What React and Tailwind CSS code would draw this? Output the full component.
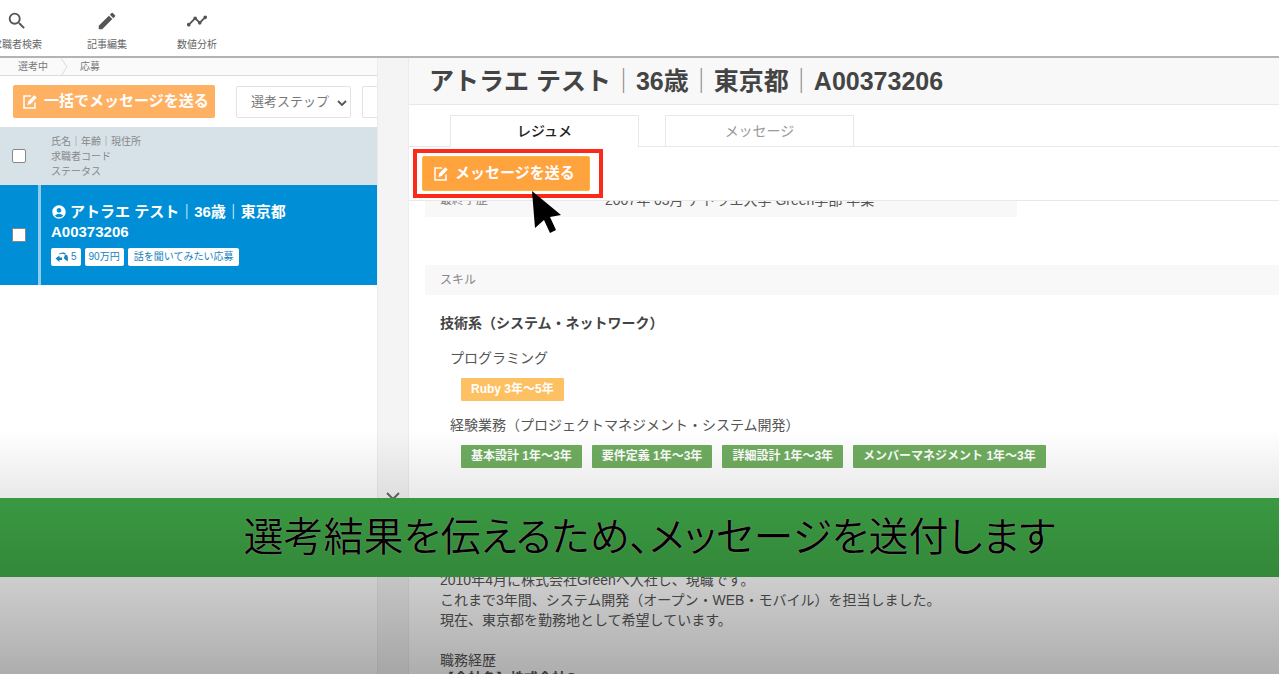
import { useState } from 'react';
import { MdSearch, MdModeEdit, MdTimeline, MdAccountCircle } from 'react-icons/md';

const navItems = [
  { label: '求職者検索', Icon: MdSearch },
  { label: '記事編集', Icon: MdModeEdit },
  { label: '数値分析', Icon: MdTimeline },
];

const experience = ['基本設計 1年〜3年', '要件定義 1年〜3年', '詳細設計 1年〜3年', 'メンバーマネジメント 1年〜3年'];

function ComposeIcon() {
  return (
    <svg viewBox="0 0 16 16" className="size-4 shrink-0" fill="none" stroke="currentColor" strokeWidth="1.5">
      <path d="M9 2H2v12h11V8.5" />
      <path d="M12.2 1.2 14.8 3.6 8.6 10 5.4 11 6.2 7.6z" fill="currentColor" stroke="none" />
    </svg>
  );
}

function ReplyIcon() {
  return (
    <svg viewBox="0 0 14 12" className="h-3 w-[14px]" fill="currentColor">
      <path d="M0.500 7.500 4.500 4.500v2h2.500v2.500H4.500V11z" />
      <path d="M3.500 3.500C5.500 1.200 9 .8 11 3l-.8.8C8.500 2.500 6 2.500 3.500 3.500z" />
      <path d="M9.500 4.500 12 3.800c1 2 1.200 4.200.5 6.700L9 7.500z" />
    </svg>
  );
}

function Header() {
  return (
    <header className="z-10 h-[58px] shrink-0 overflow-hidden border-b-2 border-[#b4b4b4] bg-white">
      <nav className="-ml-7 flex">
        {navItems.map(({ label, Icon }) => (
          <a key={label} href="#" className="flex w-[90px] flex-col items-center gap-[3px] pt-[10px] text-[10px] leading-5 text-[#666]">
            <Icon className="size-[22px] text-[#555]" />
            {label}
          </a>
        ))}
      </nav>
    </header>
  );
}

function CandidateList() {
  const [checked, setChecked] = useState(false);

  return (
    <aside className="w-[377px] shrink-0 overflow-hidden bg-white">
      <div className="flex h-[18px] items-center border-b border-[#dcdcdc] bg-[#fafafa] pl-[18px] text-[10px] text-[#777]">
        <span>選考中</span>
        <svg viewBox="0 0 8 18" className="mx-3 h-[18px] w-2" fill="none" stroke="#ddd">
          <path d="M1 0 7 9 1 18" />
        </svg>
        <span>応募</span>
      </div>

      <div className="flex h-[51px] items-center pl-[13px]">
        <button className="flex h-[33px] w-[202px] shrink-0 items-center gap-[6px] rounded-xs bg-[#ffb163] pl-[9px] text-[15px] font-bold text-white">
          <ComposeIcon />
          一括でメッセージを送る
        </button>
        <div className="relative ml-[21px] shrink-0">
          <select aria-label="選考ステップ" className="h-8 w-[115px] appearance-none rounded-xs border border-[#e3e3e3] bg-white pl-[14px] text-[13px] text-[#777]">
            <option>選考ステップ</option>
          </select>
          <svg viewBox="0 0 10 6" className="pointer-events-none absolute right-1 top-[14px] h-[6px] w-[10px]" fill="none" stroke="#555" strokeWidth="1.8">
            <path d="M1 1 5 5 9 1" />
          </svg>
        </div>
        <button aria-label="絞り込み" className="ml-[11px] h-8 w-[115px] shrink-0 rounded-xs border border-[#e3e3e3] bg-white"></button>
      </div>

      <div className="flex h-[58px] items-center bg-[#d6e1e8]">
        <input type="checkbox" aria-label="すべて選択" className="ml-3 size-[14px] appearance-none rounded-[2px] border border-[#888] bg-white" />
        <div className="ml-[25px] text-[10px] leading-[15px] text-[#888]">
          <p>氏名｜年齢｜現住所</p>
          <p>求職者コード</p>
          <p>ステータス</p>
        </div>
      </div>

      <div className="flex h-[100px] bg-[#008fd7] text-white">
        <div className="flex w-[38px] items-center pl-3">
          <input
            type="checkbox"
            aria-label="アトラエ テストを選択"
            checked={checked}
            onChange={(e) => setChecked(e.target.checked)}
            className="size-[14px] appearance-none rounded-[1px] border border-[#888] bg-white checked:bg-sky-200"
          />
        </div>
        <div className="w-[3px] bg-[#8fccee]" />
        <div className="flex-1 pl-[10px] pt-[17px]">
          <p className="flex items-center gap-[3px] text-[15px] font-bold leading-5">
            <MdAccountCircle className="size-4" />
            アトラエ テスト｜36歳｜東京都
          </p>
          <p className="text-[15px] font-bold leading-5">A00373206</p>
          <div className="mt-[6px] flex gap-1 text-[10px] leading-[18px] text-[#1583c0]">
            <span className="flex items-center gap-[2px] rounded-xs bg-white px-1">
              <ReplyIcon />5
            </span>
            <span className="rounded-xs bg-white px-1">90万円</span>
            <span className="rounded-xs bg-white px-[6px]">話を聞いてみたい応募</span>
          </div>
        </div>
      </div>
    </aside>
  );
}

function Detail() {
  return (
    <main className="flex min-w-0 flex-1 flex-col bg-white">
      <div className="flex h-[47px] shrink-0 items-center border-b border-[#e8e8e8] bg-[#f8f8f8] pl-5">
        <h1 className="whitespace-nowrap text-[25px] font-bold leading-8 text-[#444]">
          アトラエ テスト<span className="font-normal text-[#888]">｜</span>36歳<span className="font-normal text-[#888]">｜</span>東京都<span className="font-normal text-[#888]">｜</span>A00373206
        </h1>
      </div>

      <div className="flex h-[42px] shrink-0 items-end gap-[26px] border-b border-[#e8e8e8] pl-[41px] text-[14px]">
        <button className="-mb-px h-8 w-[189px] border border-b-0 border-[#e8e8e8] bg-white font-medium text-[#222]">レジュメ</button>
        <button className="h-[31px] w-[189px] border border-b-0 border-[#e8e8e8] bg-white text-[#999]">メッセージ</button>
      </div>

      <div className="relative flex h-[54px] shrink-0 items-center border-b border-[#e8e8e8] pl-1">
        <div className="border-4 border-[#fb2a1b] py-[3px] pl-[5px] pr-[9px]">
          <button className="flex h-[35px] w-[168px] items-center gap-[6px] rounded-xs border border-[#ffb43c] bg-[#ffa33f] pl-[10px] text-[15px] font-bold text-white">
            <ComposeIcon />
            メッセージを送る
          </button>
        </div>
        {/* pointer */}
        <svg viewBox="0 0 32 46" className="absolute left-[122px] top-[43px] z-10 h-[46px] w-8" fill="#000">
          <path d="M1 1 30 25 19 27 25 40 19 43 13 30 4 38z" />
        </svg>
      </div>

      {/* resume body, scrolled part way down */}
      <div className="min-h-0 flex-1 overflow-hidden pl-4 text-[14px] text-[#555]">
        <div className="-mt-[18px] flex h-[34px] w-[592px] items-center bg-[#f8f8f8] pl-[15px]">
          <span className="w-[165px] text-[12px] text-[#777]">最終学歴</span>
          <span>2007年 03月 アトラエ大学 Green学部 卒業</span>
        </div>

        <h2 className="mt-12 h-[30px] bg-[#f8f8f8] pl-[15px] text-[12px] leading-[30px] text-[#888]">スキル</h2>
        <div className="pl-[15px]">
          <h3 className="mt-[18px] font-bold leading-5 text-[#444]">技術系（システム・ネットワーク）</h3>
          <p className="ml-[10px] mt-[15px] leading-5">プログラミング</p>
          <div className="ml-[21px] mt-[10px] flex">
            <span className="rounded-[1px] bg-[#fdc163] px-[10px] text-[12px] font-bold leading-[23px] text-white">Ruby 3年〜5年</span>
          </div>
          <p className="ml-[10px] mt-[14px] leading-5">経験業務（プロジェクトマネジメント・システム開発）</p>
          <div className="ml-[21px] mt-[10px] flex gap-[10px]">
            {experience.map((item) => (
              <span key={item} className="rounded-[1px] bg-[#6fad5f] px-[10px] text-[12px] font-bold leading-[23px] text-white">
                {item}
              </span>
            ))}
          </div>
          <div className="mt-[102px] leading-5 text-[#555]">
            <p>2010年4月に株式会社Greenへ入社し、現職です。</p>
            <p>これまで3年間、システム開発（オープン・WEB・モバイル）を担当しました。</p>
            <p>現在、東京都を勤務地として希望しています。</p>
            <p className="mt-5">職務経歴</p>
            <p className="font-bold leading-4">【会社名】株式会社Green</p>
          </div>
        </div>
      </div>
    </main>
  );
}

function App() {
  return (
    <div className="relative flex h-screen flex-col overflow-hidden bg-white font-['Liberation_Sans','Noto_Sans_CJK_JP',sans-serif]" lang="ja">
      <Header />
      <div className="flex min-h-0 flex-1">
        <CandidateList />
        <div className="relative w-8 shrink-0 border-x border-[#ececec] bg-[#f4f4f4]">
          <svg viewBox="0 0 14 9" className="absolute left-2 top-[434px] h-[9px] w-[14px]" fill="none" stroke="#666" strokeWidth="2">
            <path d="M1 1 7 7 13 1" />
          </svg>
        </div>
        <Detail />
      </div>

      {/* player shade and caption strip */}
      <div className="pointer-events-none absolute inset-x-0 bottom-0 z-10 h-[244px] bg-linear-to-b from-black/0 to-black/32" />
      <div className="absolute inset-x-0 bottom-[97px] z-20 flex h-[79px] items-center justify-center bg-linear-to-b from-[#399941] to-[#33883a] pl-5">
        <p className="whitespace-nowrap text-[40px] font-[350] leading-[79px] text-black [font-feature-settings:'palt'] [text-shadow:0_0_1px_#d9a9b9]">
          選考結果を伝えるため、メッセージを送付します
        </p>
      </div>
    </div>
  );
}

export default App;
